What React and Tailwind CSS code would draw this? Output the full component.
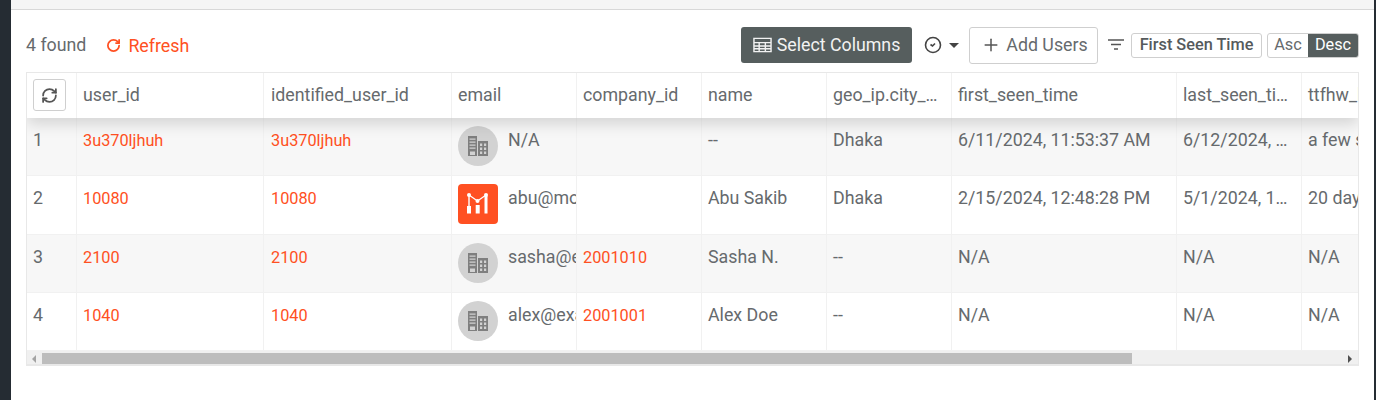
import { Plus, RefreshCw, RotateCw } from 'lucide-react';

const columns = [
  { key: 'user_id', label: 'user_id', width: 'w-[187px]', pad: 'pl-[6px]' },
  { key: 'identified', label: 'identified_user_id', width: 'w-[188px]', pad: 'pl-[7px]' },
  { key: 'email', label: 'email', width: 'w-[125px]', pad: 'pl-[6px]' },
  { key: 'company', label: 'company_id', width: 'w-[125px]', pad: 'pl-[6px]' },
  { key: 'name', label: 'name', width: 'w-[125px]', pad: 'pl-[6px]' },
  { key: 'city', label: 'geo_ip.city_name', width: 'w-[125px]', pad: 'pl-[6px]' },
  { key: 'first', label: 'first_seen_time', width: 'w-[225px]', pad: 'pl-[6px]' },
  { key: 'last', label: 'last_seen_time', width: 'w-[125px]', pad: 'pl-[6px]' },
  { key: 'ttfhw', label: 'ttfhw_label', width: 'w-[125px]', pad: 'pl-[6px]' },
];

const rows = [
  { id: 1, user_id: '3u370ljhuh', identified: '3u370ljhuh', avatar: 'building', email: 'N/A', company: '', name: '--', city: 'Dhaka', first: '6/11/2024, 11:53:37 AM', last: '6/12/2024, 10:21:09 AM', ttfhw: 'a few seconds' },
  { id: 2, user_id: '10080', identified: '10080', avatar: 'logo', email: 'abu@moesif.com', company: '', name: 'Abu Sakib', city: 'Dhaka', first: '2/15/2024, 12:48:28 PM', last: '5/1/2024, 1:14:52 PM', ttfhw: '20 days' },
  { id: 3, user_id: '2100', identified: '2100', avatar: 'building', email: 'sasha@example.com', company: '2001010', name: 'Sasha N.', city: '--', first: 'N/A', last: 'N/A', ttfhw: 'N/A' },
  { id: 4, user_id: '1040', identified: '1040', avatar: 'building', email: 'alex@example.com', company: '2001001', name: 'Alex Doe', city: '--', first: 'N/A', last: 'N/A', ttfhw: 'N/A' },
];

const orange = new Set(['user_id', 'identified', 'company']);

function BuildingAvatar() {
  return (
    <div className="w-10 h-10 shrink-0 rounded-full bg-[#d2d2d2] flex items-center justify-center">
      <svg width="22" height="22" viewBox="0 0 22 22" fill="#7f7f7f">
        <path d="M1 1h9v20H1z" />
        <path d="M11 6h10v15H11z" />
        <g fill="#d2d2d2">
          <path d="M2.500 3.500h6v1.200h-6zM2.500 6.500h6v1.200h-6zM2.500 9.500h6v1.200h-6zM2.500 12.500h6v1.200h-6zM3 16.500h5V20H3z" />
          <path d="M13 8.500h2.200v2.400H13zM17 8.500h2.200v2.400H17zM13 12.500h2.200v2.400H13zM17 12.500h2.200v2.400H17zM13 16.500h2.200v2.400H13zM17 16.500h2.200v2.400H17z" />
        </g>
      </svg>
    </div>
  );
}

function LogoAvatar() {
  return (
    <div className="w-10 h-10 shrink-0 rounded bg-[#ff5022]">
      <svg width="40" height="40" viewBox="0 0 40 40" fill="white">
        <path d="M11 11l8.500 6 8.500-6" fill="none" stroke="white" strokeWidth="1.200" />
        <circle cx="11" cy="11" r="2" />
        <circle cx="19.500" cy="17" r="2" />
        <circle cx="28" cy="11" r="2" />
        <path d="M10.300 11h1.400v11h-1.400zM9 22h4v7.500H9zM17.700 21h4v8.500h-4zM26.500 12h3v17.500h-3z" />
      </svg>
    </div>
  );
}

function Cell({ column, row, alt }) {
  const value = row[column.key];
  return (
    <div className={`${column.width} shrink-0 h-full border-r border-[#f1f1f1] ${alt ? 'bg-[#f7f7f7]' : 'bg-white'}`}>
      {column.key === 'email' ? (
        <div className="flex gap-[10px] pl-[6px] pt-2 overflow-hidden">
          {row.avatar === 'logo' ? <LogoAvatar /> : <BuildingAvatar />}
          <span className="whitespace-nowrap mt-[2px]">{value}</span>
        </div>
      ) : (
        <div className={`${column.pad} pr-[13px] whitespace-nowrap overflow-hidden text-ellipsis ${orange.has(column.key) ? 'pt-[11px] text-[#ff5022] text-[16.3px]' : 'pt-[10px]'}`}>
          {value}
        </div>
      )}
    </div>
  );
}

export default function App() {
  return (
    <div className="w-[1376px] h-[400px] bg-white overflow-hidden flex text-[17.8px] leading-[24px] text-[#666a6d] font-['Roboto',sans-serif]">
      <div className="w-[11px] shrink-0 bg-[#252c33]" />
      <main className="flex-1 min-w-0">
        <div className="h-[10px] bg-[#f5f5f5] border-b border-[#d8d8d8]" />
        <div className="px-[15px]">
          <div className="h-[62px] pt-2 flex items-center whitespace-nowrap">
            <span>4 found</span>
            <button className="ml-[20px] flex items-center gap-[7px] text-[#ff5022] mt-[1px]">
              <RotateCw className="w-[15px] h-[15px]" strokeWidth={2.800} />
              Refresh
            </button>
            <div className="ml-auto flex items-center">
              <button className="h-9 w-[171px] rounded-[3px] bg-[#565e5e] text-[#f2f2f2] flex items-center justify-center gap-[5px]">
                <svg width="19" height="16" viewBox="0 0 20 16" fill="none" stroke="#f2f2f2" strokeWidth="1.500">
                  <path d="M1 1h18v14H1zM1 5.500h18M1 9h18M1 12h18M6.500 5.500V15M13 5.500V15" />
                </svg>
                Select Columns
              </button>
              <svg className="ml-[12px]" width="18" height="18" viewBox="0 0 18 18" fill="none" stroke="#444" strokeWidth="1.600">
                <circle cx="9" cy="9" r="7.500" />
                <path d="M6.500 8.500l2 1.500 2.500-2.500" />
              </svg>
              <span className="ml-[7px] w-0 h-0 border-x-[5px] border-x-transparent border-t-[5px] border-t-[#444]" />
              <button className="ml-[10px] h-[37px] w-[129px] bg-white border border-[#cfcfcf] rounded-[3px] flex items-center justify-center gap-[5px] pl-[2px]">
                <Plus className="w-5 h-5 text-[#555]" strokeWidth={1.800} />
                Add Users
              </button>
              <svg className="ml-[9px]" width="18" height="14" viewBox="0 0 18 14" fill="none" stroke="#555" strokeWidth="1.500">
                <path d="M1 2h16M4 6.500h10M7 11h4" />
              </svg>
              <span className="ml-[6px] h-[25px] w-[131px] border border-[#cfcfcf] rounded-[3px] flex items-center justify-center text-[16.3px] font-medium text-[#555a5c]">
                First Seen Time
              </span>
              <div className="ml-[5px] h-[25px] w-[92px] flex border border-[#cfcfcf] rounded-[3px] overflow-hidden text-[16.3px]">
                <span className="w-[40px] flex items-center justify-center">Asc</span>
                <span className="flex-1 flex items-center justify-center bg-[#565e5e] text-white">Desc</span>
              </div>
            </div>
          </div>

          <div className="w-[1333px] h-[294px] border border-[#e8e8e8] border-b-2 overflow-hidden">
            <div className="relative z-10 h-[45px] flex bg-white shadow-[0_6px_14px_rgba(0,0,0,0.14)]">
              <div className="w-[50px] shrink-0 border-r border-[#f1f1f1] pl-[6px] pt-[6px]">
                <div className="w-[33px] h-[32px] border border-[#cfcfcf] rounded-[3px] flex items-center justify-center">
                  <RefreshCw className="w-[17px] h-[17px] text-[#555]" strokeWidth={2.500} />
                </div>
              </div>
              {columns.map(column => (
                <div key={column.key} className={`${column.width} ${column.pad} shrink-0 border-r border-[#f1f1f1] pr-[13px] pt-[10px] whitespace-nowrap overflow-hidden text-ellipsis`}>
                  {column.label}
                </div>
              ))}
            </div>
            {rows.map((row, i) => (
              <div key={row.id} className="h-[58px] flex border-b border-[#f1f1f1] last:h-[57px] last:border-b-0 nth-[3]:h-[59px]">
                <div className={`w-[50px] shrink-0 border-r border-[#f1f1f1] px-[6px] pt-[10px] ${i % 2 === 0 ? 'bg-[#f7f7f7]' : 'bg-white'}`}>
                  {row.id}
                </div>
                {columns.map(column => (
                  <Cell key={column.key} column={column} row={row} alt={i % 2 === 0} />
                ))}
              </div>
            ))}
            <div className="h-[15px] flex items-center bg-[#f0f0f0]">
              <span className="ml-[5px] w-0 h-0 border-y-[4px] border-y-transparent border-r-[4px] border-r-[#a3a3a3]" />
              <div className="ml-[6px] h-[11px] w-[1090px] bg-[#bdbdbd]" />
              <span className="ml-auto mr-[6px] w-0 h-0 border-y-[4px] border-y-transparent border-l-[4px] border-l-[#505050]" />
            </div>
          </div>
        </div>
      </main>
      <div className="w-[2px] shrink-0 bg-[#252c33]" />
    </div>
  );
}
